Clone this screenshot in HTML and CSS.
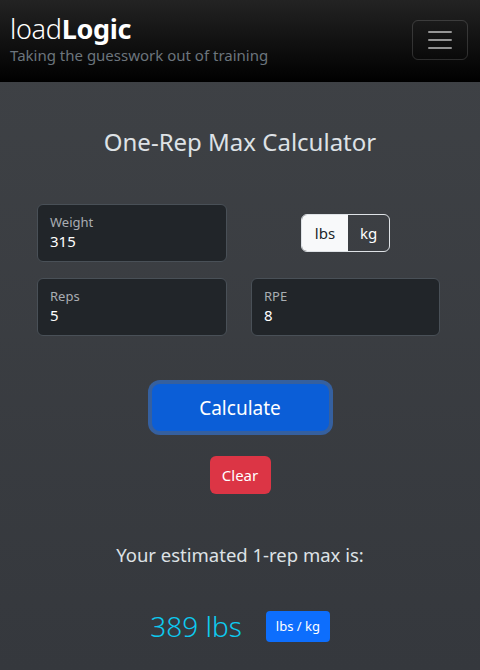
FILE: index.html
```html
<!DOCTYPE html>
<html lang="en">
<head>
<meta charset="utf-8">
<title>loadLogic</title>
<link rel="stylesheet" href="styles.css">
</head>
<body>
<nav class="navbar">
  <div class="brand-wrap">
    <div class="brand"><span class="brand-light">load</span><b>Logic</b></div>
    <div class="tagline">Taking the guesswork out of training</div>
  </div>
  <button class="toggler" aria-label="Menu">
    <svg width="30" height="30" viewBox="0 0 30 30"><path d="M4 7h22M4 15h22M4 23h22" stroke="rgba(255,255,255,0.55)" stroke-width="2" stroke-linecap="round"/></svg>
  </button>
</nav>
<main class="main">
  <h1 class="title">One-Rep Max Calculator</h1>
  <div class="form-grid">
    <div class="field">
      <span class="label">Weight</span>
      <span class="value">315</span>
    </div>
    <div class="unit-cell">
      <div class="unit-group">
        <span class="unit active">lbs</span>
        <span class="unit">kg</span>
      </div>
    </div>
    <div class="field">
      <span class="label">Reps</span>
      <span class="value">5</span>
    </div>
    <div class="field">
      <span class="label">RPE</span>
      <span class="value">8</span>
    </div>
  </div>
  <div class="actions">
    <button class="btn-calc">Calculate</button>
    <button class="btn-clear">Clear</button>
  </div>
  <p class="result-label">Your estimated 1-rep max is:</p>
  <div class="result">
    <span class="result-value">389 lbs</span>
    <button class="btn-unit">lbs / kg</button>
  </div>
</main>
</body>
</html>
```
FILE: styles.css
```css
* { box-sizing: border-box; }
html, body { margin: 0; padding: 0; }
body {
  width: 480px;
  height: 670px;
  overflow: hidden;
  font-family: "Noto Sans", "Open Sans", sans-serif;
  color: #dee2e6;
  background: linear-gradient(180deg, #3f4246 0%, #35383d 100%);
}
.navbar {
  height: 82px;
  background: linear-gradient(180deg, #232323 0%, #000 100%);
  display: flex;
  align-items: center;
  justify-content: space-between;
  padding: 0 12px 0 10px;
}
.brand-wrap { display: flex; flex-direction: column; }
.brand {
  font-size: 27px;
  line-height: 30px;
  color: #fff;
  letter-spacing: -0.3px;
  margin-top: -4px;
}
.brand-light { font-weight: 300; }
.brand b { font-weight: 700; }
.tagline {
  font-size: 15px;
  line-height: 18px;
  color: #6c757d;
  margin-top: 2px;
}
.toggler {
  width: 56px;
  height: 40px;
  border: 1px solid rgba(255,255,255,0.15);
  border-radius: 6px;
  background: transparent;
  display: flex;
  align-items: center;
  justify-content: center;
  padding: 0;
  margin-top: -2px;
}
.main { display: flex; flex-direction: column; align-items: center; }
.title {
  font-size: 24px;
  font-weight: 400;
  margin: 44px 0 0;
  line-height: 32px;
  color: #dee2e6;
}
.form-grid {
  align-self: stretch;
  display: grid;
  grid-template-columns: 190px 189px;
  column-gap: 24px;
  row-gap: 16px;
  padding: 0 40px 0 37px;
  margin-top: 46px;
}
.field {
  height: 58px;
  background: #212529;
  border: 1px solid #495057;
  border-radius: 6px;
  padding: 8px 12px 0;
  display: flex;
  flex-direction: column;
}
.label { font-size: 13px; line-height: 16px; color: #a9adb2; margin-top: 1px; }
.value { font-size: 15px; line-height: 20px; color: #fff; margin-top: 1px; }
.unit-cell { display: flex; align-items: center; justify-content: center; }
.unit-group {
  display: flex;
  border: 1px solid #dee2e6;
  border-radius: 6px;
  overflow: hidden;
  height: 38px;
}
.unit {
  display: flex;
  align-items: center;
  justify-content: center;
  font-size: 15px;
  color: #fff;
}
.unit:first-child { width: 46px; }
.unit:last-child { width: 41px; }
.unit.active { background: #f8f9fa; color: #212529; }
.actions { display: flex; flex-direction: column; align-items: center; }
.btn-calc {
  margin-top: 48px;
  width: 177px;
  height: 47px;
  border: none;
  border-radius: 8px;
  background: #0b5ed7;
  color: #fff;
  font-family: inherit;
  font-size: 19px;
  box-shadow: 0 0 0 4px rgba(49,132,253,0.5);
}
.btn-clear {
  margin-top: 25px;
  width: 61px;
  height: 38px;
  border: none;
  border-radius: 6px;
  background: #dc3545;
  color: #fff;
  font-family: inherit;
  font-size: 15px;
}
.result-label {
  margin: 48px 0 0;
  font-size: 18.5px;
  line-height: 26px;
  color: #dee2e6;
}
.result {
  display: flex;
  align-items: center;
  gap: 24px;
  margin-top: 40px;
}
.result-value {
  font-size: 28px;
  line-height: 36px;
  color: #0dcaf0;
  font-weight: 300;
}
.btn-unit {
  width: 64px;
  height: 31px;
  border: none;
  border-radius: 4px;
  background: #0d6efd;
  color: #fff;
  font-family: inherit;
  font-size: 13px;
  padding: 0;
}
```
